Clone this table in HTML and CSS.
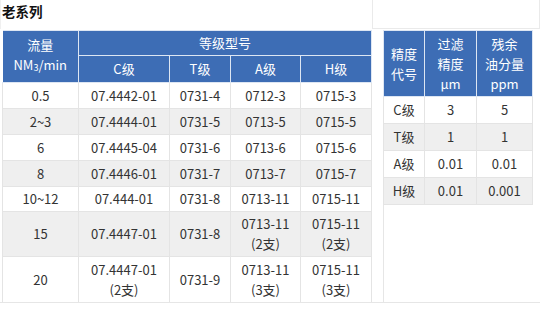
FILE: index.html
```html
<!DOCTYPE html>
<html lang="zh-CN">
<head>
<meta charset="utf-8">
<title>老系列</title>
<link rel="stylesheet" href="styles.css">
</head>
<body>
<div class="page">
  <div class="title-cell"><h2 class="title">老系列</h2></div>
  <div class="empty-cell"></div>
  <div class="left-cell">
    <table class="spec main">
      <colgroup>
        <col class="c1"><col class="c2"><col class="c3"><col class="c4"><col class="c5">
      </colgroup>
      <thead>
        <tr class="h1">
          <th rowspan="2">流量<br>NM<span class="sub">3</span>/min</th>
          <th colspan="4">等级型号</th>
        </tr>
        <tr class="h2">
          <th>C级</th><th>T级</th><th>A级</th><th>H级</th>
        </tr>
      </thead>
      <tbody>
        <tr><td>0.5</td><td>07.4442-01</td><td>0731-4</td><td>0712-3</td><td>0715-3</td></tr>
        <tr class="alt"><td>2~3</td><td>07.4444-01</td><td>0731-5</td><td>0713-5</td><td>0715-5</td></tr>
        <tr><td>6</td><td>07.4445-04</td><td>0731-6</td><td>0713-6</td><td>0715-6</td></tr>
        <tr class="alt"><td>8</td><td>07.4446-01</td><td>0731-7</td><td>0713-7</td><td>0715-7</td></tr>
        <tr class="short"><td>10~12</td><td>07.444-01</td><td>0731-8</td><td>0713-11</td><td>0715-11</td></tr>
        <tr class="alt tall"><td>15</td><td>07.4447-01</td><td>0731-8</td><td>0713-11<br>(2支)</td><td>0715-11<br>(2支)</td></tr>
        <tr class="tall"><td>20</td><td>07.4447-01<br>(2支)</td><td>0731-9</td><td>0713-11<br>(3支)</td><td>0715-11<br>(3支)</td></tr>
      </tbody>
    </table>
  </div>
  <div class="right-cell">
    <div class="right-inner">
      <table class="spec side">
        <colgroup>
          <col class="d1"><col class="d2"><col class="d3">
        </colgroup>
        <thead>
          <tr class="h3">
            <th>精度<br>代号</th>
            <th>过滤<br>精度<br>μm</th>
            <th>残余<br>油分量<br>ppm</th>
          </tr>
        </thead>
        <tbody>
          <tr><td>C级</td><td>3</td><td>5</td></tr>
          <tr class="alt"><td>T级</td><td>1</td><td>1</td></tr>
          <tr><td>A级</td><td>0.01</td><td>0.01</td></tr>
          <tr class="alt"><td>H级</td><td>0.01</td><td>0.001</td></tr>
        </tbody>
      </table>
    </div>
  </div>
</div>
</body>
</html>
```

FILE: styles.css
```css
html, body {
  margin: 0;
  padding: 0;
  background: #ffffff;
}

body {
  font-family: "Noto Sans CJK SC", "Noto Sans", sans-serif;
  color: #333333;
  font-size: 13px;
}

.page {
  width: 540px;
  display: grid;
  grid-template-columns: 372px 168px;
  grid-template-rows: 29px auto;
  border-bottom: 1px solid #e6e6e6;
}

.title-cell {
  padding: 2px 0 0 1px;
  border-left: 1px solid #f0f0f0;
}

.title {
  margin: 0;
  font-size: 13.5px;
  line-height: 18px;
  font-weight: bold;
  color: #111111;
}

.empty-cell {
  border-left: 1px solid #eaeaea;
  border-right: 1px solid #eaeaea;
  border-bottom: 1px solid #eaeaea;
}

.left-cell {
  padding: 1px 0 0 2px;
}

.right-cell {
  padding: 1px 0 0 11px;
  display: flex;
}

.right-inner {
  flex: 1;
  display: flex;
  flex-direction: column;
  align-items: flex-start;
  border-left: 1px solid #e6e6e6;
}

.spec {
  border-collapse: collapse;
  table-layout: fixed;
  text-align: center;
}

.spec th,
.spec td {
  border: 1px solid #e4e4e4;
  padding: 0;
  line-height: 20px;
  vertical-align: middle;
  font-weight: normal;
}

.spec th {
  background: #3d6db5;
  color: #ffffff;
  border-color: #dde6f3;
}

.spec tr.alt td {
  background: #efefef;
}

.main {
  width: 369px;
}

.main .c1 { width: 76px; }
.main .c2 { width: 91px; }
.main .c3 { width: 61px; }
.main .c4 { width: 70px; }
.main .c5 { width: 71px; }

.main tr.h1 th { height: 24px; }
.main tr.h2 th { height: 26px; }
.main tbody td { height: 25px; }
.main tbody tr.short td { height: 24px; }
.main tbody tr.tall td { height: 44px; }
.main tbody tr:last-child td { height: 45px; border-bottom: none; }

.main tr.h1 th:first-child {
  border-left: none;
}

.sub {
  font-size: 9px;
  vertical-align: -1px;
}

.side {
  width: 149px;
  margin-left: -1px;
}

.side .d1 { width: 41px; }
.side .d2 { width: 52px; }
.side .d3 { width: 56px; }

.side tr.h3 th { height: 65px; }
.side tbody td { height: 26px; }
```
